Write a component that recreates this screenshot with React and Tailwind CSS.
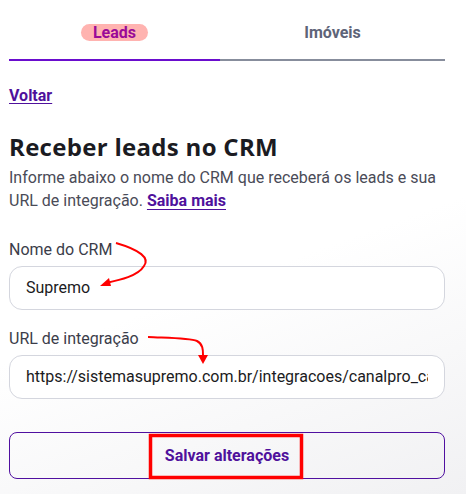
import React from 'react'

export default function App() {
  return (
    <div
      className="relative h-[494px] w-[466px] overflow-hidden bg-[linear-gradient(160deg,#ffffff_55%,#f1f1f3_100%)]"
      style={{ fontFamily: 'Roboto, "Liberation Sans", sans-serif' }}
    >
      <div className="flex flex-col pl-[9px] pr-[21px]">
        {/* tabs */}
        <div className="flex pt-[24px]">
          <div className="flex w-[211px] flex-col items-center">
            <span className="rounded-full bg-[#ffb3b0] px-[12px] text-[16px] font-bold leading-[17px] text-[#9a0a98]">
              Leads
            </span>
            <div className="mt-[18px] h-[2px] w-full bg-[#6a0dce]" />
          </div>
          <div className="flex flex-1 flex-col items-center">
            <span className="px-[12px] text-[16px] font-bold leading-[17px] text-[#5e6478]">
              Imóveis
            </span>
            <div className="mt-[18px] h-[2px] w-full bg-[#878d9c]" />
          </div>
        </div>

        <a className="mt-[25px] self-start text-[16px] font-bold leading-[20px] text-[#4f119c] underline decoration-[1px] underline-offset-[2px]">
          Voltar
        </a>

        <h1
          className="mt-[26px] text-[24px] font-bold leading-[30px] tracking-[0.3px] text-[#1b1b22]"
          style={{ fontFamily: '"Open Sans", Lato, sans-serif' }}
        >
          Receber leads no CRM
        </h1>
        <p className="mt-[4px] text-[16px] leading-[23px] text-[#4a4b57]">
          Informe abaixo o nome do CRM que receberá os leads e sua URL de integração.{' '}
          <a className="font-bold text-[#4f119c] underline decoration-[1px] underline-offset-[3px]">Saiba mais</a>
        </p>

        <label className="mt-[28px] text-[16px] leading-[20px] text-[#3b3d4a]">Nome do CRM</label>
        <div className="mt-[6px] flex h-[44px] items-center rounded-[13px] border border-[#d4d6de] bg-white px-[16px] text-[16px] text-[#1b1b22]">
          Supremo
        </div>

        <label className="mt-[19px] text-[16px] leading-[20px] text-[#3b3d4a]">URL de integração</label>
        <div className="mt-[6px] flex h-[44px] items-center overflow-hidden whitespace-nowrap rounded-[13px] border border-[#d4d6de] bg-white pl-[16px] pr-[16px] text-[16px] text-[#1b1b22]">
          <span className="min-w-0 overflow-hidden">https://sistemasupremo.com.br/integracoes/canalpro_canal</span>
        </div>

        <button className="mt-[33px] flex h-[47px] items-center justify-center rounded-[8px] border border-[#5010a0] bg-transparent text-[16px] font-bold text-[#4f119c]">
          Salvar alterações
        </button>
      </div>

      {/* red annotations */}
      <svg className="pointer-events-none absolute left-0 top-0" width="466" height="494">
        <path d="M116 243 C 140 250, 150 258, 144 266 C 138 276, 120 280, 106 283" fill="none" stroke="#f00" strokeWidth="2" />
        <polygon points="100,286 109,278 111,286" fill="#f00" />
        <path d="M148 337 C 170 338, 190 338, 197 341 C 203 344, 203 350, 203 355" fill="none" stroke="#f00" strokeWidth="2" />
        <polygon points="198,355 208,355 203,364" fill="#f00" />
        <rect x="150.5" y="435.5" width="151" height="42" fill="none" stroke="#f00" strokeWidth="3.5" />
      </svg>
    </div>
  )
}
